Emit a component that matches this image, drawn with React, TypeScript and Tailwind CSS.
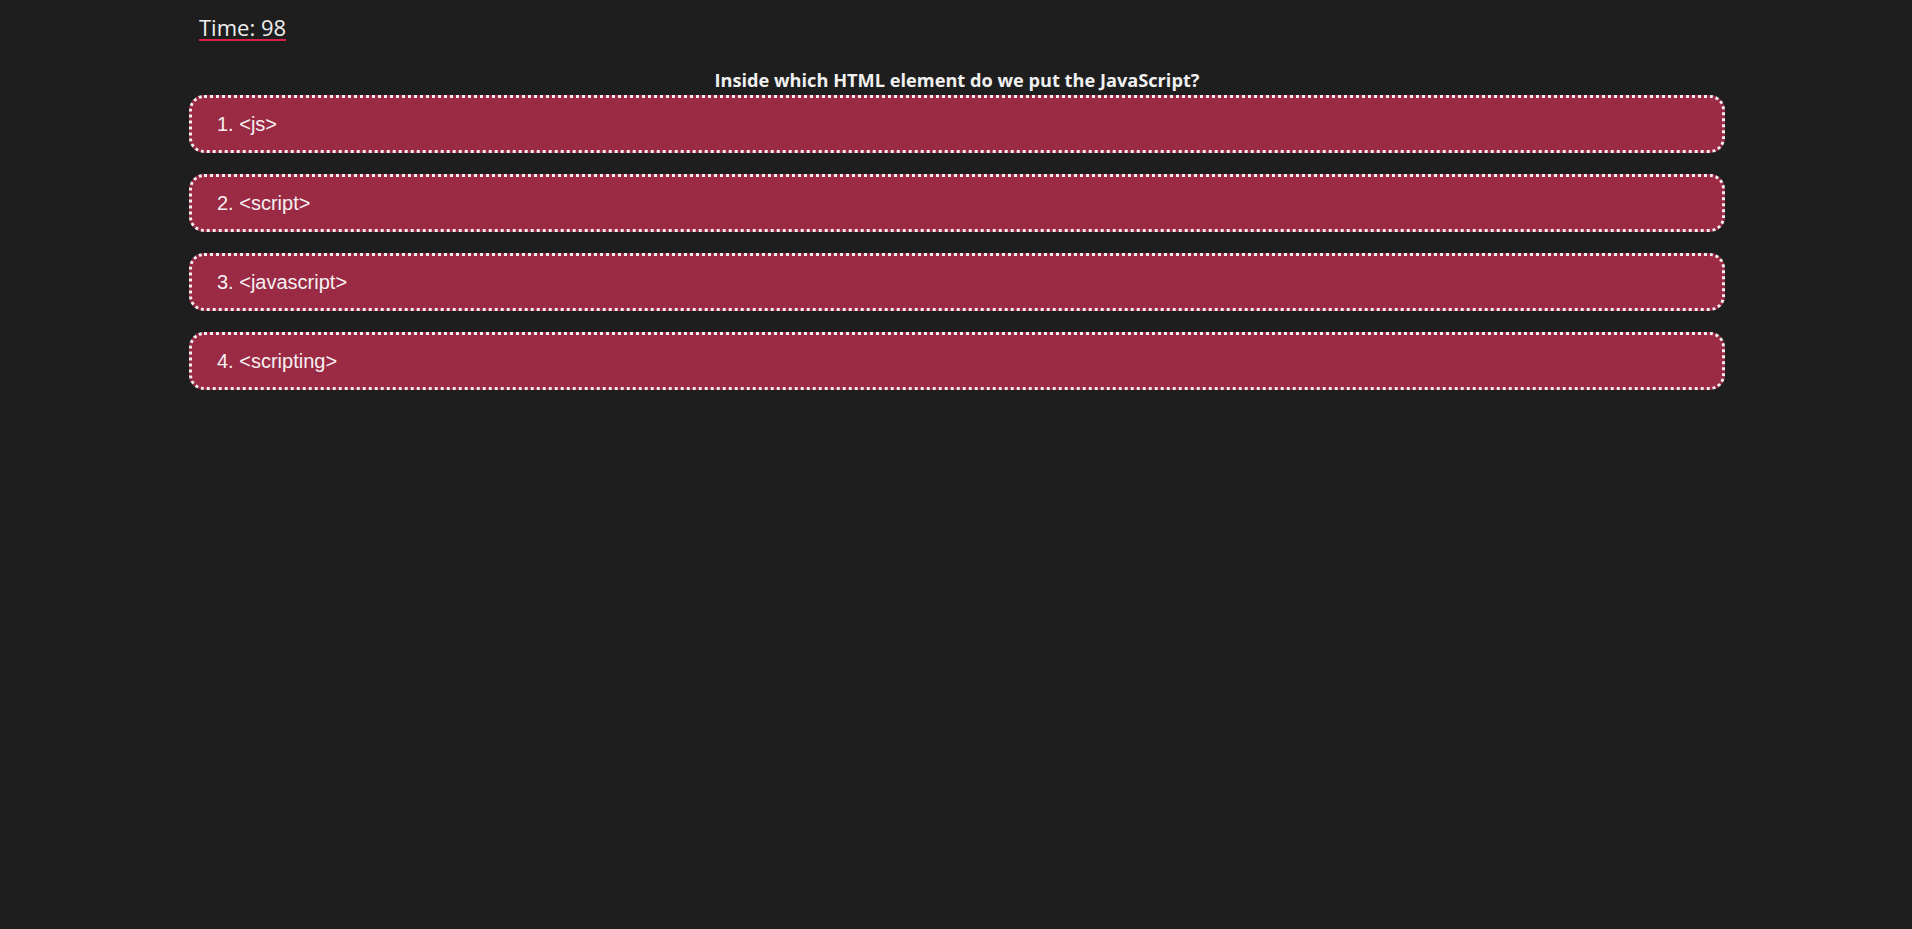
import React from "react";

const answers = ["1. <js>", "2. <script>", "3. <javascript>", "4. <scripting>"];

export default function App() {
  return (
    <div className="min-h-screen w-full bg-[#1e1e1e] text-[#f2f2f2]">
      <div className="pl-[199px] pt-[15px] h-[66px]">
        <span
          className="inline-block border-b-2 border-[#dc1f48] text-[22px] leading-[24px] text-[#f0f0f0]"
          style={{ fontFamily: "'Open Sans', Lato, sans-serif" }}
        >
          Time: 98
        </span>
      </div>
      <div
        className="ml-[189px] w-[1536px] text-center font-bold text-[18.2px] leading-[29px] text-[#f0f0f0]"
        style={{ fontFamily: "'Open Sans', Lato, sans-serif" }}
      >
        Inside which HTML element do we put the JavaScript?
      </div>
      <div className="ml-[189px] w-[1536px] flex flex-col gap-[21px]">
        {answers.map((a) => (
          <div
            key={a}
            className="h-[58px] flex items-center pl-[25px] rounded-[15px] border-[3px] border-dotted border-[#f4eef0] bg-[#9b2a44] text-[20px] text-[#f6f0f2]"
            style={{ fontFamily: "'Liberation Sans', Arial, sans-serif" }}
          >
            {a}
          </div>
        ))}
      </div>
    </div>
  );
}
